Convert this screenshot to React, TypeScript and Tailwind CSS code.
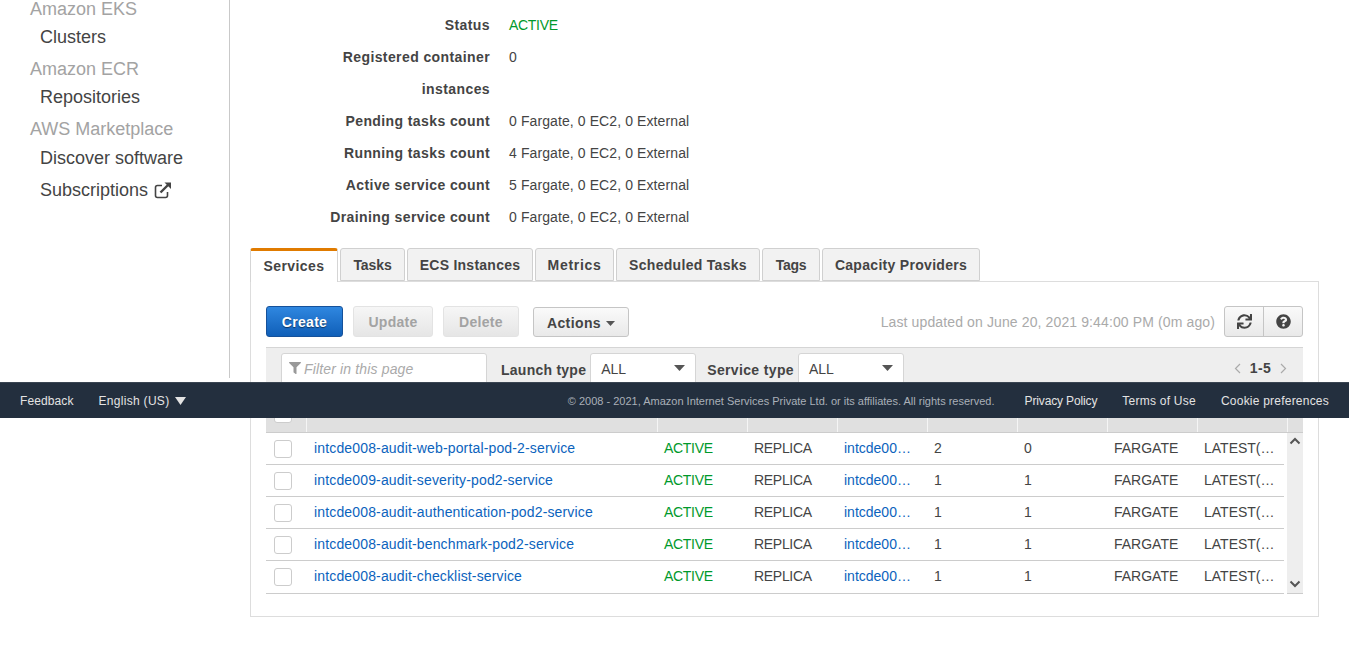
import { FaFilter, FaQuestionCircle, FaSync } from 'react-icons/fa';

const details = [
  { label: 'Status', value: 'ACTIVE', green: true },
  { label: 'Registered container', value: '0' },
  { label: 'instances', value: '' },
  { label: 'Pending tasks count', value: '0 Fargate, 0 EC2, 0 External' },
  { label: 'Running tasks count', value: '4 Fargate, 0 EC2, 0 External' },
  { label: 'Active service count', value: '5 Fargate, 0 EC2, 0 External' },
  { label: 'Draining service count', value: '0 Fargate, 0 EC2, 0 External' },
];

const tabs = [
  { name: 'Tasks', className: 'w-[65px] tracking-[-0.1px]' },
  { name: 'ECS Instances', className: 'w-[126px] tracking-[0.25px]' },
  { name: 'Metrics', className: 'w-[79px] tracking-[0.7px]' },
  { name: 'Scheduled Tasks', className: 'w-[144px] tracking-[0.3px]' },
  { name: 'Tags', className: 'w-[58px] tracking-[-0.3px]' },
  { name: 'Capacity Providers', className: 'w-[158px] tracking-[0.3px]' },
];

const services = [
  { name: 'intcde008-audit-web-portal-pod-2-service', desired: '2', running: '0' },
  { name: 'intcde009-audit-severity-pod2-service', desired: '1', running: '1' },
  { name: 'intcde008-audit-authentication-pod2-service', desired: '1', running: '1' },
  { name: 'intcde008-audit-benchmark-pod2-service', desired: '1', running: '1' },
  { name: 'intcde008-audit-checklist-service', desired: '1', running: '1' },
];

const headerCols = ['w-[41px]', 'w-[351px]', 'w-[90px]', 'w-[90px]', 'w-[90px]', 'w-[90px]', 'w-[90px]', 'w-[90px]', 'w-[90px]'];

function Caret({ w, h, className }: { w: number; h: number; className?: string }) {
  return (
    <svg width={w} height={h} viewBox="0 0 10 6" preserveAspectRatio="none" className={className}>
      <path d="M0 0h10L5 6z" fill="currentColor" />
    </svg>
  );
}

function ExternalIcon() {
  return (
    <svg width="18" height="18" viewBox="0 0 18 18" fill="none" stroke="currentColor">
      <path d="M8 4.5H3.5a2 2 0 0 0-2 2v8a2 2 0 0 0 2 2h8a2 2 0 0 0 2-2V11" strokeWidth="1.6" />
      <path d="M6.5 11.5 15 3" strokeWidth="2.4" />
      <path d="M10.5 1.5h6.5V8z" fill="currentColor" stroke="none" />
    </svg>
  );
}

function Sidebar() {
  return (
    <aside className="w-[230px] h-[383px] shrink-0 border-r border-[#c9c9c9] pl-[30px] text-[18px] leading-[28px] -mt-[5px]">
      <p className="text-[#a3a3a3]">Amazon EKS</p>
      <p className="pl-[10px] text-[#444444]">Clusters</p>
      <p className="pt-[4px] text-[#a3a3a3]">Amazon ECR</p>
      <p className="pl-[10px] text-[#444444]">Repositories</p>
      <p className="pt-[4px] text-[#a3a3a3]">AWS Marketplace</p>
      <p className="pl-[10px] pt-[1px] text-[#444444]">Discover software</p>
      <p className="pl-[10px] pt-[4px] text-[#444444] flex items-center gap-[6px]">
        Subscriptions <ExternalIcon />
      </p>
    </aside>
  );
}

function Tabs() {
  return (
    <div className="flex items-end gap-[2px] h-[33px] relative z-10">
      <div className="h-[34px] w-[88px] -mb-px bg-white border-x border-[#d5d5d5] border-t-[3px] border-t-[#e07b00] rounded-t-[3px] text-center leading-[31px] font-bold tracking-[0.4px] text-[#444444]">
        Services
      </div>
      {tabs.map((tab) => (
        <div
          key={tab.name}
          className={`h-[33px] bg-[#f2f2f2] border border-[#d0d0d0] rounded-t-[3px] leading-[33px] text-center font-bold text-[#444444] whitespace-nowrap ${tab.className}`}
        >
          {tab.name}
        </div>
      ))}
    </div>
  );
}

function Toolbar() {
  return (
    <div className="flex items-center h-[32px]">
      <button className="w-[77px] h-[31px] pt-[2px] rounded-[3px] border border-[#15519a] bg-gradient-to-b from-[#2f87e0] to-[#0f5fb8] text-white font-bold tracking-[0.3px] [text-shadow:0_1px_1px_rgba(0,0,0,0.5)]">
        Create
      </button>
      <button className="ml-[10px] w-[80px] h-[31px] pt-[2px] rounded-[3px] border border-[#e3e3e3] bg-gradient-to-b from-[#f6f6f6] to-[#e6e6e6] text-[#a3a3a3] font-bold tracking-[0.3px]">
        Update
      </button>
      <button className="ml-[10px] w-[76px] h-[31px] pt-[2px] rounded-[3px] border border-[#e3e3e3] bg-gradient-to-b from-[#f6f6f6] to-[#e6e6e6] text-[#a3a3a3] font-bold tracking-[0.3px]">
        Delete
      </button>
      <button className="ml-[14px] mt-[2px] w-[96px] h-[30px] pt-[2px] rounded-[3px] border border-[#c5c5c5] bg-gradient-to-b from-[#fafafa] to-[#e9e9e9] text-[#444444] font-bold tracking-[0.4px] flex items-center justify-center gap-[5px]">
        Actions <Caret w={9} h={5} className="text-[#555555]" />
      </button>
      <span className="ml-auto mt-[2px] text-[#aaaaaa] tracking-[0.12px]">Last updated on June 20, 2021 9:44:00 PM (0m ago)</span>
      <div className="ml-[9px] flex h-[31px] w-[79px] rounded-[3px] border border-[#c5c5c5] bg-gradient-to-b from-[#fafafa] to-[#e9e9e9] text-[#444444]">
        <span className="flex-1 flex items-center justify-center border-r border-[#c5c5c5]">
          <FaSync size={15} />
        </span>
        <span className="flex-1 flex items-center justify-center">
          <FaQuestionCircle size={15} />
        </span>
      </div>
    </div>
  );
}

function FilterBar() {
  return (
    <div className="h-[86px] mt-[10px] bg-[#eeeeee] border-t border-[#d5d5d5] relative">
      <div className="flex items-start h-[52px] pl-[15px] pr-[16px] pt-[5px]">
        <div className="w-[206px] h-[40px] bg-white border border-[#d5d5d5] rounded-[3px] flex items-start pt-[5px] pl-[7px] gap-[3px] text-[#aaaaaa] italic tracking-[0.15px]">
          <FaFilter size={12} className="mt-[3px] text-[#999999]" /> Filter in this page
        </div>
        <span className="ml-[14px] mt-[7px] font-bold text-[#444444] tracking-[0.25px]">Launch type</span>
        <div className="ml-[4px] w-[106px] h-[40px] bg-white border border-[#d5d5d5] rounded-[3px] flex items-start pt-[5px] pl-[10px] pr-[10px] justify-between text-[#444444]">
          ALL <Caret w={11} h={6} className="mt-[6px] text-[#555555]" />
        </div>
        <span className="ml-[11px] mt-[7px] font-bold text-[#444444] tracking-[0.35px]">Service type</span>
        <div className="ml-[4px] w-[106px] h-[40px] bg-white border border-[#d5d5d5] rounded-[3px] flex items-start pt-[5px] pl-[10px] pr-[10px] justify-between text-[#444444]">
          ALL <Caret w={11} h={6} className="mt-[6px] text-[#555555]" />
        </div>
        <span className="ml-auto mt-[5px] flex items-center gap-[9px] font-bold text-[#444444] tracking-[0.3px]">
          <svg width="7" height="11" viewBox="0 0 7 11" fill="none" stroke="#aaaaaa" strokeWidth="1.2"><path d="M6 1 1.5 5.5 6 10" /></svg>
          1-5
          <svg width="7" height="11" viewBox="0 0 7 11" fill="none" stroke="#aaaaaa" strokeWidth="1.2"><path d="M1 1l4.5 4.5L1 10" /></svg>
        </span>
      </div>
      <div className="absolute left-0 right-0 bottom-0 h-[33px] bg-[#e0e0e0] border-b border-[#cccccc] flex">
        {headerCols.map((w, i) => (
          <span key={i} className={`${w} h-full border-r border-[#f5f5f5]`}>
            {i === 0 && <span className="block mt-[5px] ml-[8px] w-[18px] h-[18px] bg-white border border-[#cccccc] rounded-[3px]" />}
          </span>
        ))}
      </div>
    </div>
  );
}

function ServiceRow({ name, desired, running }: { name: string; desired: string; running: string }) {
  return (
    <div className="flex items-center h-[32px] last:h-[33px] last:pb-[1px] border-b border-[#cccccc] text-[#444444]">
      <span className="w-[41px] pl-[8px] shrink-0">
        <span className="block w-[18px] h-[18px] border border-[#cccccc] rounded-[3px]" />
      </span>
      <span className="w-[350px] pl-[7px] shrink-0 text-[#0b63bd] tracking-[0.15px]">{name}</span>
      <span className="w-[90px] pl-[7px] shrink-0 text-[#00992b] tracking-[-0.3px]">ACTIVE</span>
      <span className="w-[90px] pl-[7px] shrink-0 tracking-[-0.3px]">REPLICA</span>
      <span className="w-[90px] pl-[7px] shrink-0 text-[#0b63bd]">intcde00…</span>
      <span className="w-[90px] pl-[7px] shrink-0">{desired}</span>
      <span className="w-[90px] pl-[7px] shrink-0">{running}</span>
      <span className="w-[90px] pl-[7px] shrink-0">FARGATE</span>
      <span className="w-[84px] pl-[7px] shrink-0">LATEST(…</span>
    </div>
  );
}

export default function App() {
  return (
    <div className="relative w-[1349px] h-[653px] overflow-hidden bg-white flex font-['Liberation_Sans',Arial,sans-serif] text-[14px] text-[#444444]">
      <Sidebar />
      <main className="flex-1 pl-[20px] pr-[30px]">
        <div className="h-[248px] pt-[9px]">
          {details.map((row) => (
            <div key={row.label} className="flex h-[32px] leading-[32px]">
              <span className="w-[240px] text-right font-bold tracking-[0.4px]">{row.label}</span>
              <span className={`ml-[19px] ${row.green ? 'text-[#00992b] tracking-[-0.3px]' : 'tracking-[0.1px]'}`}>{row.value}</span>
            </div>
          ))}
        </div>
        <Tabs />
        <div className="h-[336px] border border-[#dddddd] px-[15px] pt-[23px]">
          <Toolbar />
          <FilterBar />
          <div className="flex">
            <div className="w-[1018px] shrink-0">
              {services.map((s) => (
                <ServiceRow key={s.name} {...s} />
              ))}
            </div>
            <div className="ml-[3px] flex-1 h-[161px] bg-[#eeeeee] border-b border-[#cccccc] flex flex-col items-center justify-between pt-[4px] pb-[5px] text-[#555555]">
              <svg width="12" height="8" viewBox="0 0 12 8"><path d="M1.5 6.5 6 2l4.5 4.5" fill="none" stroke="currentColor" strokeWidth="2" /></svg>
              <svg width="12" height="8" viewBox="0 0 12 8"><path d="M1.5 1.5 6 6l4.5-4.5" fill="none" stroke="currentColor" strokeWidth="2" /></svg>
            </div>
          </div>
        </div>
      </main>
      <footer className="absolute left-0 right-0 top-[382px] h-[36px] bg-[#232f3e] border-t border-[#3a4552] flex items-center pl-[20px] pr-[20px] pt-[1px] text-[12px] text-[#e3e3e3]">
        <span className="tracking-[0.1px]">Feedback</span>
        <span className="ml-[25px] flex items-center gap-[6px] tracking-[0.3px]">
          English (US) <Caret w={11} h={8} />
        </span>
        <span className="ml-auto text-[11px] text-[#aab0b8]">© 2008 - 2021, Amazon Internet Services Private Ltd. or its affiliates. All rights reserved.</span>
        <span className="ml-[30px] tracking-[-0.14px]">Privacy Policy</span>
        <span className="ml-[25px] tracking-[0.25px]">Terms of Use</span>
        <span className="ml-[25px] tracking-[0.22px]">Cookie preferences</span>
      </footer>
    </div>
  );
}
